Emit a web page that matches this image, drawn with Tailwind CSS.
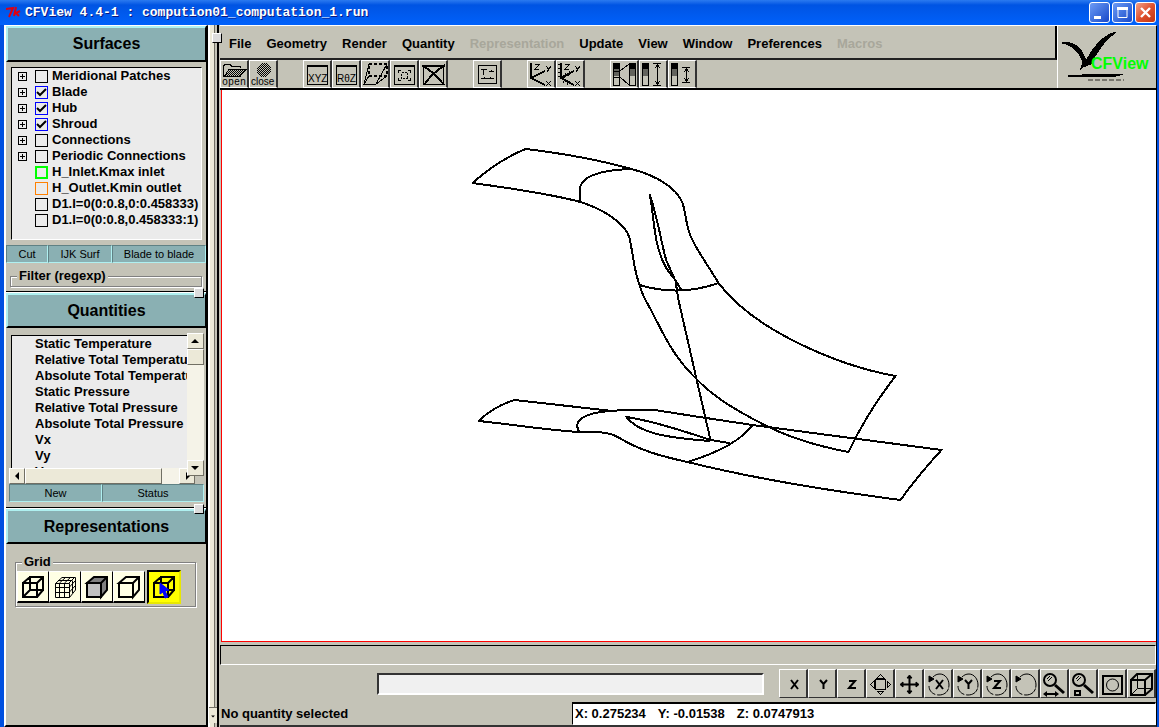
<!DOCTYPE html>
<html lang="en">
<head>
    <meta charset="UTF-8">
    <meta name="viewport" content="width=device-width, initial-scale=1.0">
    <title>CFView 4.4-1</title>
    <script src="https://cdn.jsdelivr.net/npm/@tailwindcss/browser@4"></script>
</head>
<body class="h-screen flex flex-col overflow-hidden bg-[#c4c3b7] font-['Liberation_Sans',Arial,sans-serif] text-[13px] leading-4 font-bold text-black">

    <!-- shared icon pieces -->
    <svg class="absolute size-0" aria-hidden="true">
        <defs>
            <pattern id="dither" width="2" height="2" patternUnits="userSpaceOnUse">
                <rect width="1" height="1"/><rect x="1" y="1" width="1" height="1"/>
            </pattern>
            <g id="rot" fill="none" stroke="#000">
                <path d="M8 6C10 4 12 3 15 3C20 3 24 8 24 14C24 20 20 24 14 24C8 24 4 20 4 15" stroke-dasharray="26 1 14 2"/>
                <path d="M4 5L9 8L4 11Z" fill="#000"/>
            </g>
            <g id="lens" fill="none" stroke="#000">
                <circle cx="9" cy="9" r="6" stroke-width="2"/>
                <path d="M14 14L23 22" stroke-width="3"/>
                <path d="M6 8L9 5M7 10L11 6"/>
            </g>
            <g id="legend">
                <rect x="0" y="0" width="6" height="22" fill="none" stroke="#000"/>
                <rect x="0" y="0" width="6" height="5"/>
                <rect x="0" y="5" width="6" height="7" fill="url(#dither)" stroke="none"/>
            </g>
        </defs>
    </svg>

    <!-- title bar -->
    <header class="h-[25px] shrink-0 flex items-center pl-1.5 pr-[3px] bg-linear-to-b from-[#2a7af0] via-[#0054e3] via-20% to-[#0061fb]">
        <svg class="w-4 h-3.5" viewBox="0 0 16 14" fill="none" stroke="#e00010" stroke-width="2">
            <path d="M0 3L7 2L3 11M10 1L8 10M8 8L14 5M10 7L13 10"/>
        </svg>
        <h1 class="pl-[3px] grow font-['Liberation_Mono',monospace] text-[13px] text-white [text-shadow:1px_1px_0_#0a1883]">CFView 4.4-1 : compution01_computation_1.run</h1>
        <div class="flex gap-0.5">
            <button aria-label="Minimize" class="size-[21px] rounded-[3px] border border-white bg-linear-to-br from-[#6d9bf5] to-[#1846c8]">
                <svg viewBox="0 0 19 19"><rect x="4" y="13" width="7" height="3" fill="#fff"/></svg>
            </button>
            <button aria-label="Maximize" class="size-[21px] rounded-[3px] border border-white bg-linear-to-br from-[#6d9bf5] to-[#1846c8]">
                <svg viewBox="0 0 19 19"><path d="M5 5.500V14.500H14V4" fill="none" stroke="#fff"/><rect x="4" y="4" width="11" height="3" fill="#fff"/></svg>
            </button>
            <button aria-label="Close" class="size-[21px] rounded-[3px] border border-white bg-linear-to-br from-[#f0a088] via-[#e0512d] to-[#c03412]">
                <svg viewBox="0 0 19 19"><path d="M5 5L14 14M14 5L5 14" stroke="#fff" stroke-width="2.400"/></svg>
            </button>
        </div>
    </header>

    <div class="grow min-h-0 flex border-l-4 border-r-2 border-[#0050e0]">

        <!-- side panels -->
        <aside class="w-[204px] shrink-0 flex flex-col border-2 border-t border-l-white border-t-white border-r-black border-b-black">
            <h2 class="h-9 shrink-0 flex items-center justify-center border-t-2 border-l-2 border-b-2 border-r border-t-[#aff0f0] border-l-[#aff0f0] border-b-black border-r-black bg-[#8ab0b3] text-base">Surfaces</h2>
            <div class="mt-[5px] ml-[5px] mr-1 h-[173px] shrink-0 border border-black border-r-white border-b-white bg-[#ebebeb] overflow-hidden whitespace-nowrap">
                <ul id="surfaces"></ul>
            </div>
            <div class="mt-[5px] h-[18px] shrink-0 flex text-[11px] font-normal">
                <button class="w-[42px] bg-[#8ab0b3] border border-[#5f8184] border-b-[#aff0f0] border-r-[#aff0f0]">Cut</button>
                <button class="w-16 bg-[#8ab0b3] border border-[#5f8184] border-b-[#aff0f0] border-r-[#aff0f0]">IJK Surf</button>
                <button class="grow bg-[#8ab0b3] border border-[#5f8184] border-b-[#aff0f0] border-r-[#aff0f0]">Blade to blade</button>
            </div>
            <fieldset class="mt-[5px] ml-1 mr-1 h-[19px] shrink-0 border border-[#808080] shadow-[inset_1px_1px_0_#fff,1px_1px_0_#fff] px-1.5">
                <legend class="px-0.5 bg-[#c4c3b7]">Filter (regexp)</legend>
            </fieldset>
            <div class="relative mt-1 h-0.5 shrink-0 border-t border-b border-t-black border-b-white">
                <span class="absolute right-0.5 -top-1 size-2.5 bg-[#dcdcdc] border border-white border-r-black border-b-black"></span>
            </div>

            <h2 class="h-[35px] shrink-0 flex items-center justify-center border-t-2 border-l-2 border-b-2 border-r border-t-[#aff0f0] border-l-[#aff0f0] border-b-black border-r-black bg-[#8ab0b3] text-base">Quantities</h2>
            <div class="mt-[5px] ml-[3px] mr-0.5 h-[151px] shrink-0 grid grid-cols-[1fr_17px] grid-rows-[1fr_16px]">
                <ul id="quantities" class="mt-0.5 ml-0.5 pl-[23px] border-t border-l border-black bg-[#ebebeb] overflow-hidden whitespace-nowrap"></ul>
                <div class="-mb-2 z-10 flex flex-col bg-[#f5f3e8]">
                    <button aria-label="Scroll up" class="h-4 bg-[#ece9d8] border border-white border-r-[#716f64] border-b-[#716f64]"><svg viewBox="0 0 14 14" class="size-3.5"><path d="M3 9H11L7 5Z"/></svg></button>
                    <div class="h-4 bg-[#ece9d8] border border-white border-r-[#716f64] border-b-[#716f64]"></div>
                    <button aria-label="Scroll down" class="mt-auto h-4 bg-[#ece9d8] border border-white border-r-[#716f64] border-b-[#716f64]"><svg viewBox="0 0 14 14" class="size-3.5"><path d="M3 5H11L7 9Z"/></svg></button>
                </div>
                <div class="-mr-2 flex bg-[#f5f3e8] col-start-1">
                    <button aria-label="Scroll left" class="w-4 bg-[#ece9d8] border border-white border-r-[#716f64] border-b-[#716f64]"><svg viewBox="0 0 14 14" class="size-3.5"><path d="M9 3V11L5 7Z"/></svg></button>
                    <div class="w-[137px] bg-[#ece9d8] border border-white border-r-[#716f64] border-b-[#716f64]"></div>
                    <button aria-label="Scroll right" class="ml-auto w-4 bg-[#ece9d8] border border-white border-r-[#716f64] border-b-[#716f64]"><svg viewBox="0 0 14 14" class="size-3.5"><path d="M6 3V11L10 7Z"/></svg></button>
                </div>
            </div>
            <div class="ml-[3px] mr-0.5 h-[18px] shrink-0 grid grid-cols-[93fr_102fr] text-[11px] font-normal">
                <button class="bg-[#8ab0b3] border border-[#5f8184] border-b-[#aff0f0] border-r-[#aff0f0]">New</button>
                <button class="bg-[#8ab0b3] border border-[#5f8184] border-b-[#aff0f0] border-r-[#aff0f0]">Status</button>
            </div>
            <div class="relative mt-[5px] h-0.5 shrink-0 border-t border-b border-t-black border-b-white">
                <span class="absolute right-0.5 -top-1 size-2.5 bg-[#dcdcdc] border border-white border-r-black border-b-black"></span>
            </div>

            <h2 class="h-[35px] shrink-0 flex items-center justify-center border-t-2 border-l-2 border-b-2 border-r border-t-[#aff0f0] border-l-[#aff0f0] border-b-black border-r-black bg-[#8ab0b3] text-base">Representations</h2>
            <fieldset class="mt-2.5 ml-[9px] mr-2.5 border border-[#808080] shadow-[inset_1px_1px_0_#fff,1px_1px_0_#fff]">
                <legend class="ml-1.5 px-0.5 bg-[#c4c3b7]">Grid</legend>
                <div class="flex items-center pl-px pb-0.5">
                    <button aria-label="Boundary grid" class="size-8 bg-[#ffffe4] border border-white border-r-black border-b-2 border-b-black">
                        <svg viewBox="0 0 30 30" fill="none" stroke="#000" stroke-width="2"><path d="M5 11H19V25H5ZM12 5H25V18H12ZM5 11L12 5M19 11L25 5M19 25L25 18M5 25L12 18"/></svg>
                    </button>
                    <button aria-label="Full grid" class="size-8 bg-[#ffffe4] border border-white border-r-black border-b-2 border-b-black">
                        <svg viewBox="0 0 30 30" fill="none" stroke="#000" stroke-width="1"><path d="M5.500 11.500H19.500V25.500H5.500ZM5.500 15.500H19M5.500 20.500H19M9.500 11V25M14.500 11V25M5.500 11.500L12 5.500H25.500V18L19.500 25.500M9.500 11L16 5M14.500 11L21 5M19 11L25 5M19 15.500L25 9M19 20.500L25 14M8 8.500H22M22.500 8.500V21"/></svg>
                    </button>
                    <button aria-label="Solid" class="size-8 bg-[#ffffe4] border border-white border-r-black border-b-2 border-b-black">
                        <svg viewBox="0 0 30 30" stroke="#000" stroke-width="2"><path fill="#808080" d="M5 11L12 5H25V18L19 25V11Z"/><path fill="#c0c0c0" d="M5 11H19V25H5Z"/><path d="M19 11L25 5"/></svg>
                    </button>
                    <button aria-label="Hidden line" class="size-8 bg-[#ffffe4] border border-white border-r-black border-b-2 border-b-black">
                        <svg viewBox="0 0 30 30" fill="none" stroke="#000" stroke-width="2"><path d="M5 11L12 5H25V18L19 25V11ZM5 11V25H19M19 11L25 5"/></svg>
                    </button>
                    <button aria-label="Select grid" class="ml-0.5 size-[34px] bg-[#ffff00] border-2 border-black border-r-[#e8e800] border-b-[#e8e800]">
                        <svg viewBox="0 0 30 30" fill="none" stroke="#000" stroke-width="2"><path d="M5 11H19V25H5ZM12 5H25V18H12ZM5 11L12 5M19 11L25 5M19 25L25 18"/><path d="M11 11L20 18L16 19L19 25L16 26L14 20L11 22Z" fill="#00f" stroke="#00f" stroke-width="1"/></svg>
                    </button>
                </div>
            </fieldset>
        </aside>

        <!-- scroll strip and sash -->
        <div class="relative w-3 shrink-0 flex">
            <div class="w-[7px] border-l-2 border-r border-l-white border-r-[#716f64] bg-[#ece9d8]"></div>
            <div class="ml-0.5 w-0.5 bg-black"></div>
            <span class="absolute left-1 top-2 z-10 size-2.5 bg-[#dcdcdc] border border-white border-r-black border-b-black"></span>
            <svg class="absolute left-px bottom-1 w-2 h-4 bg-[#ece9d8] border-t border-[#716f64]" viewBox="0 0 8 16"><path d="M2 8H6L4 10Z"/></svg>
        </div>

        <main class="grow min-w-0 flex flex-col border-t border-r border-t-white border-r-black border-b-2 border-b-[#333]">
            <div class="h-16 shrink-0 flex border-b-2 border-black">
                <div class="grow min-w-0 flex flex-col">
                    <nav class="h-[34px] flex items-center gap-[15px] pt-[3px] pl-[9px] border-b-2 border-r-2 border-b-[#222] border-r-black">
                        <a href="#">File</a>
                        <a href="#">Geometry</a>
                        <a href="#">Render</a>
                        <a href="#">Quantity</a>
                        <a href="#" class="text-[#a8a79b]">Representation</a>
                        <a href="#">Update</a>
                        <a href="#">View</a>
                        <a href="#">Window</a>
                        <a href="#">Preferences</a>
                        <a href="#" class="text-[#a8a79b]">Macros</a>
                    </nav>
                    <div id="toolbar" class="flex grow gap-[25px]">
                        <div class="flex">
                            <button aria-label="open" class="w-[29px] border border-white border-r-2 border-r-[#333]">
                                <svg viewBox="0 0 26 26" shape-rendering="crispEdges" fill="none" stroke="#000"><path d="M2.500 15V5L4 3.500H9L11 5.500H19.500V7"/><path d="M3 15.500L8 8.500H25L19 15.500Z" fill="url(#dither)"/><text x="1" y="24" class="font-['Liberation_Mono',monospace] font-normal text-[10px]" fill="#000" stroke="none">open</text></svg>
                            </button>
                            <button aria-label="close" class="w-[29px] border border-white border-r-2 border-r-[#333]">
                                <svg viewBox="0 0 26 26" shape-rendering="crispEdges"><circle cx="14" cy="9" r="7" fill="url(#dither)"/><text x="1" y="24" class="font-['Liberation_Sans',sans-serif] font-normal text-[10px]">close</text></svg>
                            </button>
                        </div>
                        <div class="flex">
                            <button aria-label="XYZ projection" class="w-[29px] border border-white border-r-2 border-r-[#333]">
                                <svg viewBox="0 0 26 26" shape-rendering="crispEdges"><path d="M3.500 4V23.500H23.500V4" fill="none" stroke="#000"/><path d="M3 4H24V6H3Z"/><text x="4" y="21" class="font-['Liberation_Sans',sans-serif] font-normal text-[10px]">XYZ</text></svg>
                            </button>
                            <button aria-label="R theta Z projection" class="w-[29px] border border-white border-r-2 border-r-[#333]">
                                <svg viewBox="0 0 26 26" shape-rendering="crispEdges"><path d="M3.500 4V23.500H23.500V4" fill="none" stroke="#000"/><path d="M3 4H24V6H3Z"/><text x="4" y="21" class="font-['Liberation_Sans',sans-serif] font-normal text-[10px]">RθZ</text></svg>
                            </button>
                            <button aria-label="Perspective" class="w-[29px] border border-white border-r-2 border-r-[#333]">
                                <svg viewBox="0 0 26 26" shape-rendering="crispEdges" fill="none" stroke="#000"><path d="M7 3L2 23H14L25 15M2 23L7 15M14 23L25 3"/><path d="M7 3H25V15H7Z" stroke-width="1.500" stroke-dasharray="3 2"/></svg>
                            </button>
                            <button aria-label="Fit view" class="w-[29px] border border-white border-r-2 border-r-[#333]">
                                <svg viewBox="0 0 26 26" shape-rendering="crispEdges" fill="none" stroke="#000"><path d="M3.500 4V23.500H23.500V4"/><path d="M3 4H24V6H3Z" fill="#000" stroke="none"/><path d="M7.500 12V9.500H10M17 9.500H19.500V12M19.500 17V19.500H17M10 19.500H7.500V17"/><path d="M10.500 11.500H16.500V17.500H10.500Z" stroke-dasharray="2 1"/></svg>
                            </button>
                            <button aria-label="Delete view" class="w-[29px] border border-white border-r-2 border-r-[#333]">
                                <svg viewBox="0 0 26 26" shape-rendering="crispEdges" fill="none" stroke="#000"><path d="M3.500 4V23.500H23.500V4"/><path d="M3 4H24V6H3Z" fill="#000" stroke="none"/><path d="M2 5Q14 10 24 24M25 4Q12 12 4 24" stroke-width="2"/></svg>
                            </button>
                        </div>
                        <div class="flex">
                            <button aria-label="Text" class="w-[29px] border border-white border-r-2 border-r-[#333]">
                                <svg viewBox="0 0 26 26" shape-rendering="crispEdges" fill="none" stroke="#000"><path d="M4.500 4.500H22.500V22.500H4.500ZM7 8.500H13M9.500 8V14M15 10.500H20M17.500 9V11M7 17.500H20M10.500 16V18M16.500 16V18"/></svg>
                            </button>
                        </div>
                        <div class="flex">
                            <button aria-label="Axes" class="w-[29px] border border-white border-r-2 border-r-[#333]">
                                <svg viewBox="0 0 26 26" shape-rendering="crispEdges" fill="none" stroke="#000"><path d="M3 2V17L17 10M3 17L17 24" stroke-width="2"/><path d="M7 3.500H11L7 8.500H11M18 5L20.500 8M23 5L19 11M18 20L23 25M23 20L18 25"/></svg>
                            </button>
                            <button aria-label="Scaled axes" class="w-[29px] border border-white border-r-2 border-r-[#333]">
                                <svg viewBox="0 0 26 26" shape-rendering="crispEdges" fill="none" stroke="#000"><path d="M4 2V17L17 10M4 17L17 24" stroke-width="2"/><path d="M1 3.500H5M1 7.500H5M1 11.500H5M1 15.500H5M7 17L9 12M11 15L13 10M6 22L8 18M10 24L12 20M8 3.500H12L8 8.500H12M18 5L20.500 8M23 5L19 11M18 20L23 25M23 20L18 25"/></svg>
                            </button>
                        </div>
                        <div class="flex">
                            <button aria-label="Colormap range" class="w-[29px] border border-white border-r-2 border-r-[#333]">
                                <svg viewBox="0 0 26 26" shape-rendering="crispEdges" fill="none" stroke="#000"><use href="#legend" x="2.500" y="2.500" fill="#000"/><use href="#legend" x="18.500" y="2.500" fill="#000"/><path d="M9 10L18 3M9 16L18 24M3 10.500H9M3 16.500H9"/></svg>
                            </button>
                            <button aria-label="Full range" class="w-[29px] border border-white border-r-2 border-r-[#333]">
                                <svg viewBox="0 0 26 26" shape-rendering="crispEdges" fill="none" stroke="#000"><use href="#legend" x="2.500" y="2.500" fill="#000"/><path d="M13 2.500H21M13 24.500H21M17.500 3V24M15 7L17.500 4L20 7M15 20L17.500 23L20 20"/></svg>
                            </button>
                            <button aria-label="Local range" class="w-[29px] border border-white border-r-2 border-r-[#333]">
                                <svg viewBox="0 0 26 26" shape-rendering="crispEdges" fill="none" stroke="#000"><use href="#legend" x="2.500" y="2.500" fill="#000"/><path d="M13 6.500H21M13 21.500H21M17.500 7V21M15 11L17.500 8L20 11M15 17L17.500 20L20 17"/></svg>
                            </button>
                        </div>
                    </div>
                </div>
                <div class="w-[99px] shrink-0 border-l border-white">
                    <svg viewBox="0 0 98 62" shape-rendering="crispEdges">
                        <path d="M4 16C17 16 24 22 28 35C35 22 44 9 58 6C48 13 39 25 33 38L25 41L22 44L25 37C22 27 15 19 4 17Z" stroke="#000"/>
                        <path d="M10 50L38 48H65L58 50H35Z" stroke="#000"/>
                        <path d="M30 53.500H66" stroke="#77756d" stroke-width="2" stroke-dasharray="5 2"/>
                        <text x="33" y="43" fill="#00ff00" class="font-['Liberation_Sans',sans-serif] font-bold text-[16px]">CFView</text>
                    </svg>
                </div>
            </div>

            <!-- 3D view -->
            <div class="grow min-h-0 ml-px bg-white border-l border-b border-[#ff0000]">
                <svg class="w-full h-full" viewBox="223 90 933 551" fill="none" stroke="#000" stroke-width="2" shape-rendering="crispEdges">
                    <!-- shroud -->
                    <path d="M473 183Q499 160 526 149C560 153 600 160 632 169C655 175 677 187 683 203C687 215 686 224 691 236C697 250 707 263 719 283C755 331 840 366 896 376L890 384Q866 416 849 452C806 444 781 433 765 425C738 411 715 398 697 379C673 356 664 334 651 309C645 299 642 292 640 285C634 268 634 256 630 238C626 223 603 209 581 202C555 195 510 188 473 183"/>
                    <path d="M581 202L580 190C581 177 598 170 632 169"/>
                    <path d="M640 285Q680 297 719 283"/>
                    <!-- blade -->
                    <path d="M650 194C654 210 654 236 660 252C664 266 670 273 675 279L682 290"/>
                    <path d="M650 194C659 220 662 245 667 261L676 281L679 300L697 379L711 440"/>
                    <!-- hub -->
                    <path d="M479 421Q495 406 515 400L613 411Q630 409 655 410L700 417L753 425L942 450Q918 476 901 500C840 492 760 480 688 462C660 456 640 450 620 438C607 430 597 433 580 432C545 430 510 424 479 421"/>
                    <path d="M580 432C573 422 583 412 613 411"/>
                    <path d="M753 425Q737 447 688 462"/>
                    <path d="M730 443L711 440C690 433 655 421 627 417C640 434 670 438 711 441"/>
                </svg>
            </div>

            <div class="mt-[3px] h-5 shrink-0 border border-black border-b-white border-r-white"></div>

            <div class="mt-1 h-[29px] shrink-0 flex items-center">
                <input type="text" aria-label="Command" class="ml-[157px] mr-[15px] grow min-w-0 h-[22px] border-2 border-[#333] border-r-white border-b-white bg-[#f0f0f0]">
                <div class="flex h-full">
                    <button aria-label="X view" class="w-[29px] border border-white border-r-2 border-r-[#333] border-b-[#333]"><svg viewBox="0 0 26 26" fill="none" stroke="#000" stroke-width="2"><path d="M11 9L18 18M18 9L11 18"/></svg></button>
                    <button aria-label="Y view" class="w-[29px] border border-white border-r-2 border-r-[#333] border-b-[#333]"><svg viewBox="0 0 26 26" fill="none" stroke="#000" stroke-width="2"><path d="M11 9L14.500 13L18 9M14.500 13V18"/></svg></button>
                    <button aria-label="Z view" class="w-[29px] border border-white border-r-2 border-r-[#333] border-b-[#333]"><svg viewBox="0 0 26 26" fill="none" stroke="#000" stroke-width="2"><path d="M11 10H17L11 17H18"/></svg></button>
                    <button aria-label="Scrolling" class="w-[29px] border border-white border-r-2 border-r-[#333] border-b-[#333]"><svg viewBox="0 0 26 26" shape-rendering="crispEdges" fill="none" stroke="#000"><path d="M8.500 8.500H18.500V18.500H8.500ZM10 7L13.500 3.500L17 7ZM10 20L13.500 23.500L17 20ZM7 10L3.500 13.500L7 17ZM20 10L23.500 13.500L20 17Z"/></svg></button>
                    <button aria-label="Translate" class="w-[29px] border border-white border-r-2 border-r-[#333] border-b-[#333]"><svg viewBox="0 0 26 26" stroke="#000"><path d="M13.500 5V22M5 13.500H22" stroke-width="2"/><path d="M11 7H16L13.500 4ZM11 20H16L13.500 23ZM7 11V16L4 13.500ZM20 11V16L23 13.500Z"/></svg></button>
                    <button aria-label="Rotate about X" class="w-[29px] border border-white border-r-2 border-r-[#333] border-b-[#333]"><svg viewBox="0 0 26 26" fill="none" stroke="#000"><use href="#rot"/><path d="M11 9L18 18M18 9L11 18" stroke-width="2"/></svg></button>
                    <button aria-label="Rotate about Y" class="w-[29px] border border-white border-r-2 border-r-[#333] border-b-[#333]"><svg viewBox="0 0 26 26" fill="none" stroke="#000"><use href="#rot"/><path d="M11 9L14.500 13L18 9M14.500 13V18" stroke-width="2"/></svg></button>
                    <button aria-label="Rotate about Z" class="w-[29px] border border-white border-r-2 border-r-[#333] border-b-[#333]"><svg viewBox="0 0 26 26" fill="none" stroke="#000"><use href="#rot"/><path d="M11 10H17L11 17H18" stroke-width="2"/></svg></button>
                    <button aria-label="Rotate" class="w-[29px] border border-white border-r-2 border-r-[#333] border-b-[#333]"><svg viewBox="0 0 26 26"><use href="#rot"/></svg></button>
                    <button aria-label="Zoom" class="w-[29px] border border-white border-r-2 border-r-[#333] border-b-[#333]"><svg viewBox="0 0 26 26" stroke="#000"><use href="#lens"/><path d="M4 23H16" stroke-width="2"/><path d="M6 20V26L2 23ZM14 20V26L18 23Z" stroke="none"/></svg></button>
                    <button aria-label="Zoom area" class="w-[29px] border border-white border-r-2 border-r-[#333] border-b-[#333]"><svg viewBox="0 0 26 26" fill="none" stroke="#000"><use href="#lens"/><path d="M5 20H10V24H5Z" stroke-width="2"/></svg></button>
                    <button aria-label="Original view" class="w-[29px] border border-white border-r-2 border-r-[#333] border-b-[#333]"><svg viewBox="0 0 26 26" fill="none" stroke="#000"><path d="M4 5H23V23H4Z" stroke-width="2"/><circle cx="13.500" cy="14" r="6"/></svg></button>
                    <button aria-label="Viewing options" class="w-[29px] border border-white border-r-2 border-r-[#333] border-b-[#333]"><svg viewBox="0 0 26 26" fill="none" stroke="#000"><path d="M3 9H17V24H3ZM3 9L9 3H24V18L17 24M17 9L24 3" stroke-width="2"/><path d="M9.500 3V17.500H24M9 18L3 24"/></svg></button>
                </div>
            </div>

            <div class="mt-1 h-[23px] shrink-0 grid grid-cols-[352fr_584fr] items-center">
                <p class="pl-px">No quantity selected</p>
                <output class="h-full flex items-center gap-3 pl-0.5 border border-black border-t-2 border-r-white border-b-white bg-white">
                    <span>X: 0.275234</span><span>Y: -0.01538</span><span>Z: 0.0747913</span>
                </output>
            </div>
        </main>
    </div>

    <script>
        const surfaces = [
            { name: 'Meridional Patches', open: true },
            { name: 'Blade', open: true, on: true },
            { name: 'Hub', open: true, on: true },
            { name: 'Shroud', open: true, on: true },
            { name: 'Connections', open: true },
            { name: 'Periodic Connections', open: true },
            { name: 'H_Inlet.Kmax inlet', box: 'border-2 border-[#00ff00]' },
            { name: 'H_Outlet.Kmin outlet', box: 'border border-[#ff8000]' },
            { name: 'D1.I=0(0:0.8,0:0.458333)' },
            { name: 'D1.I=0(0:0.8,0.458333:1)' }
        ];
        const tick = '<svg class="absolute left-px top-px size-[11px] pointer-events-none" viewBox="0 0 11 11" fill="none" stroke="#000" stroke-width="2"><path d="M1 5L4 8L10 2"/></svg>';
        const expander = '<button aria-label="Expand" class="block size-[9px]"><svg class="size-[9px]" viewBox="0 0 9 9" fill="none" stroke="#000" shape-rendering="crispEdges"><path d="M.5 .5H8.500V8.500H.5ZM2 4.500H7M4.500 2V7"/></svg></button>';
        document.getElementById('surfaces').innerHTML = surfaces.map(({ name, open, on, box }) => {
            const frame = box || (on ? 'border border-[#0000ff]' : 'border border-black');
            return `<li class="h-4 flex items-center pl-1.5"><span class="w-[17px]">${open ? expander : ''}</span>
                <label class="flex items-center gap-1"><span class="relative block size-[13px]"><input type="checkbox" ${on ? 'checked' : ''} class="block appearance-none size-[13px] ${frame}">${on ? tick : ''}</span>${name}</label></li>`;
        }).join('');

        const quantities = ['Static Temperature', 'Relative Total Temperature', 'Absolute Total Temperature', 'Static Pressure',
            'Relative Total Pressure', 'Absolute Total Pressure', 'Vx', 'Vy', 'Vz'];
        document.getElementById('quantities').innerHTML = quantities.map(q => `<li class="h-4">${q}</li>`).join('');
    </script>
</body>
</html>
